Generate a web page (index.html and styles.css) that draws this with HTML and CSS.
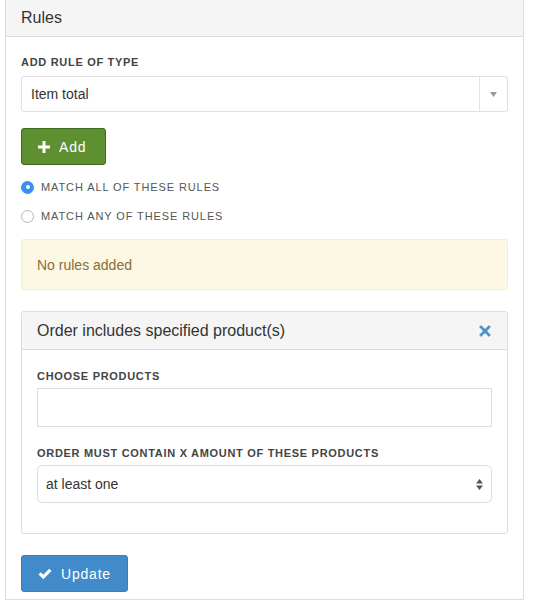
FILE: index.html
```html
<!DOCTYPE html>
<html>
<head>
<meta charset="utf-8">
<link rel="stylesheet" href="styles.css">
</head>
<body>
<div class="panel">
  <div class="panel-heading">Rules</div>
  <div class="panel-body">
    <label class="field-label">Add rule of type</label>
    <div class="select-box">
      <span class="select-value">Item total</span>
      <span class="select-arrow"><svg width="7" height="5" viewBox="0 0 7 5"><path d="M0 0H7L3.5 5Z" fill="#999"/></svg></span>
    </div>
    <div class="btn-row">
      <button class="btn btn-green">
        <svg class="btn-icon" width="12" height="12" viewBox="0 0 12 12"><path d="M4.5 0h3v4.5H12v3H7.5V12h-3V7.5H0v-3h4.5Z" fill="#fff"/></svg>
        <span>Add</span>
      </button>
    </div>
    <div class="radio-group">
      <div class="radio-row">
        <span class="radio checked"></span>
        <span class="radio-label">Match all of these rules</span>
      </div>
      <div class="radio-row">
        <span class="radio"></span>
        <span class="radio-label">Match any of these rules</span>
      </div>
    </div>
    <div class="alert">No rules added</div>
    <div class="subpanel">
      <div class="subpanel-heading">
        <span>Order includes specified product(s)</span>
        <svg class="close-icon" width="12" height="12" viewBox="0 0 12 12"><path d="M2 0.6L6 4.4L10 0.6L11.4 2L7.6 6L11.4 10L10 11.4L6 7.6L2 11.4L0.6 10L4.4 6L0.6 2Z" fill="#4a8fc8" stroke="#4a8fc8" stroke-width="0.8" stroke-linejoin="round"/></svg>
      </div>
      <div class="subpanel-body">
        <label class="field-label">Choose products</label>
        <div class="text-input"></div>
        <label class="field-label second">Order must contain x amount of these products</label>
        <div class="native-select">
          <span>at least one</span>
          <svg width="7" height="11" viewBox="0 0 7 11"><path d="M0 4.5H7L3.5 0Z M0 6.5H7L3.5 11Z" fill="#555"/></svg>
        </div>
      </div>
    </div>
    <div class="btn-row last">
      <button class="btn btn-blue">
        <svg class="btn-icon" width="14" height="12" viewBox="0 0 14 12"><path d="M0.5 6.5L2.8 4.3L5.3 6.8L11.2 0.8L13.5 3L5.3 11.2Z" fill="#fff"/></svg>
        <span>Update</span>
      </button>
    </div>
  </div>
</div>
</body>
</html>
```

FILE: styles.css
```css
* { box-sizing: border-box; }
body {
  margin: 0;
  padding: 0 0 0 5px;
  background: #fff;
  font-family: "Liberation Sans", Arial, sans-serif;
  font-size: 14px;
  color: #333;
}
.panel {
  width: 519px;
  border: 1px solid #ddd;
  border-top: none;
  min-height: 600px;
}
.panel-heading {
  background: #f5f5f5;
  border-bottom: 1px solid #ddd;
  padding: 8px 15px;
  height: 37px;
  font-size: 16px;
  line-height: 20px;
  color: #333;
}
.panel-body {
  padding: 18px 15px 0 15px;
  display: flex;
  flex-direction: column;
}
.field-label {
  display: block;
  font-size: 11px;
  font-weight: bold;
  line-height: 15px;
  letter-spacing: 0.7px;
  text-transform: uppercase;
  color: #444;
  margin-bottom: 6px;
}
.select-box {
  height: 36px;
  border: 1px solid #e0e0e0;
  border-radius: 3px;
  display: flex;
  align-items: center;
  justify-content: space-between;
}
.select-value {
  padding-left: 9px;
  color: #333;
}
.select-arrow {
  width: 28px;
  height: 34px;
  border-left: 1px solid #e3e3e3;
  display: flex;
  align-items: center;
  justify-content: center;
}
.btn-row { margin-top: 16px; display: flex; }
.btn-row.last { margin-top: 21px; }
.btn {
  font-family: "Liberation Sans", Arial, sans-serif;
  font-size: 14px;
  letter-spacing: 0.8px;
  color: #fff;
  height: 37px;
  border-radius: 3px;
  display: flex;
  align-items: center;
  gap: 9px;
  cursor: pointer;
}
.btn-green {
  background: #5e8f31;
  border: 1px solid #3d6a1c;
  padding: 0 16px 0 16px;
  width: 85px;
}
.btn-blue {
  background: #428bca;
  border: 1px solid #3a7fba;
  padding: 0 16px 0 16px;
  width: 107px;
  gap: 9px;
}
.radio-group {
  margin-top: 12px;
  display: flex;
  flex-direction: column;
  gap: 9px;
}
.radio-row {
  height: 20px;
  display: flex;
  align-items: center;
  gap: 7px;
}
.radio {
  width: 13px;
  height: 13px;
  border-radius: 50%;
  border: 1px solid #b5b5b5;
  background: #fff;
  display: flex;
  align-items: center;
  justify-content: center;
}
.radio.checked {
  background: #3b8ff0;
  border-color: #3b8ff0;
}
.radio.checked::after {
  content: "";
  width: 4px;
  height: 4px;
  border-radius: 50%;
  background: #fff;
}
.radio-label {
  font-size: 11px;
  letter-spacing: 0.9px;
  text-transform: uppercase;
  color: #555;
}
.alert {
  margin-top: 13px;
  background: #fcf8e3;
  border: 1px solid #faebcc;
  border-radius: 3px;
  padding: 15px;
  line-height: 20px;
  height: 51px;
  color: #8a6d3b;
}
.subpanel {
  margin-top: 21px;
  border: 1px solid #ddd;
  border-radius: 3px;
}
.subpanel-heading {
  background: #f5f5f5;
  border-bottom: 1px solid #ddd;
  height: 38px;
  padding: 0 15px;
  display: flex;
  align-items: center;
  justify-content: space-between;
  font-size: 16px;
  color: #333;
}
.close-icon { margin-right: 1px; }
.subpanel-body {
  padding: 19px 15px 30px 15px;
}
.subpanel-body .field-label { margin-bottom: 4px; }
.subpanel-body .field-label.second { margin-top: 19px; }
.text-input {
  height: 39px;
  border: 1px solid #ddd;
}
.native-select {
  height: 38px;
  border: 1px solid #ddd;
  border-radius: 5px;
  display: flex;
  align-items: center;
  justify-content: space-between;
  padding: 0 8px 0 8px;
  color: #333;
}
```
